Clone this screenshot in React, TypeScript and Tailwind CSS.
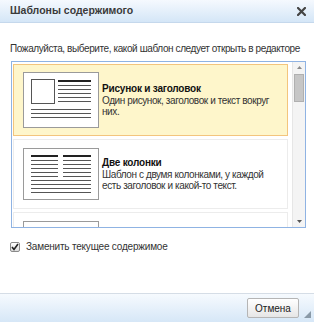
import React from "react";

const Lines = ({ count, x1, x2, startY, step }: { count: number; x1: number; x2: number; startY: number; step: number }) => (
  <>
    {Array.from({ length: count }).map((_, i) => (
      <line key={i} x1={x1} x2={x2} y1={startY + i * step} y2={startY + i * step} stroke="#555" strokeWidth="1" />
    ))}
  </>
);

// миниатюра "рисунок и заголовок"
const ThumbImage = () => (
  <svg width="76" height="56" viewBox="0 0 76 56" className="shrink-0">
    <rect x="0.5" y="0.5" width="75" height="55" fill="#fff" stroke="#9a9a9a" />
    <rect x="8.5" y="7.5" width="23" height="24" fill="#fff" stroke="#555" />
    <line x1="35" x2="68" y1="9" y2="9" stroke="#222" strokeWidth="2" />
    <Lines count={5} x1={35} x2={68} startY={13.5} step={4} />
    <Lines count={3} x1={8} x2={68} startY={37.5} step={4} />
  </svg>
);

// миниатюра "две колонки"
const ThumbColumns = () => (
  <svg width="76" height="52" viewBox="0 0 76 52" className="shrink-0">
    <rect x="0.5" y="0.5" width="75" height="51" fill="#fff" stroke="#9a9a9a" />
    <line x1="8" x2="35" y1="8" y2="8" stroke="#222" strokeWidth="2" />
    <line x1="40" x2="68" y1="8" y2="8" stroke="#222" strokeWidth="2" />
    <Lines count={5} x1={8} x2={35} startY={12.5} step={4} />
    <Lines count={5} x1={40} x2={68} startY={12.5} step={4} />
    <Lines count={4} x1={8} x2={68} startY={32.5} step={4} />
  </svg>
);

const App = () => {
  return (
    <div className="w-[314px] h-[322px] bg-white flex flex-col font-['Liberation_Sans',Arial,sans-serif] text-[#333] overflow-hidden">
      {/* заголовок окна */}
      <div className="h-[23px] shrink-0 flex items-center justify-between pl-[10px] pr-[8px] bg-gradient-to-b from-[#f5f9fe] to-[#d4e6f7] border-b border-[#c5d8ec]">
        <span className="text-[10.5px] font-bold text-[#3a3a3a]">Шаблоны содержимого</span>
        <svg width="9" height="9" viewBox="0 0 9 9">
          <path d="M1 1 L8 8 M8 1 L1 8" stroke="#444" strokeWidth="2.2" strokeLinecap="square" />
        </svg>
      </div>

      <div className="flex-1 flex flex-col pl-[11px] pt-[19px]">
        <p className="text-[10px] leading-[14px] tracking-[-0.4px] -ml-[1px] whitespace-nowrap">
          Пожалуйста, выберите, какой шаблон следует открыть в редакторе
        </p>

        {/* список шаблонов */}
        <div className="mt-[5px] w-[295px] h-[167px] border border-[#8fb3e3] flex overflow-hidden">
          <div className="flex-1 flex flex-col gap-[3px] pt-[2px] pl-[1px] overflow-hidden">
            <div className="w-[275px] h-[72px] shrink-0 flex items-center gap-[3px] pl-[9px] bg-[#fef6cb] border border-[#f3c57d]">
              <ThumbImage />
              <div className="w-[175px] text-[10px] leading-[11px] tracking-[-0.4px]">
                <div className="font-bold text-[#111] mb-[1px] tracking-[-0.2px]">Рисунок и заголовок</div>
                <div>Один рисунок, заголовок и текст вокруг них.</div>
              </div>
            </div>
            <div className="w-[275px] h-[70px] shrink-0 flex items-center gap-[3px] pl-[9px] border border-[#ececec]">
              <ThumbColumns />
              <div className="w-[175px] text-[10px] leading-[11px] tracking-[-0.4px]">
                <div className="font-bold text-[#111] mb-[1px] tracking-[-0.2px]">Две колонки</div>
                <div>Шаблон с двумя колонками, у каждой есть заголовок и какой-то текст.</div>
              </div>
            </div>
            <div className="w-[275px] h-[70px] shrink-0 pl-[9px] pt-[8px] border border-[#ececec]">
              <div className="w-[76px] h-[52px] border border-[#9a9a9a]" />
            </div>
          </div>

          {/* полоса прокрутки */}
          <div className="w-[13px] shrink-0 bg-[#f4f4f4] border-l border-[#e6e6e6] flex flex-col items-center">
            <svg width="13" height="12" viewBox="0 0 13 12">
              <path d="M4 7 L6.5 4 L9 7 Z" fill="#8a8a8a" />
            </svg>
            <div className="w-[10px] h-[28px] bg-[#c6c6c6] border border-[#b0b0b0]" />
            <div className="flex-1" />
            <svg width="13" height="12" viewBox="0 0 13 12">
              <path d="M4 5 L6.5 8 L9 5 Z" fill="#555" />
            </svg>
          </div>
        </div>

        {/* флажок */}
        <label className="mt-[11px] -ml-[1px] flex items-center gap-[6px] text-[10px] tracking-[-0.2px]">
          <span className="w-[10px] h-[10px] border border-[#8a8a8a] rounded-[2px] bg-gradient-to-b from-[#fff] to-[#dcdcdc] flex items-center justify-center">
            <svg width="8" height="8" viewBox="0 0 8 8">
              <path d="M1 4 L3 6.5 L7 1" stroke="#222" strokeWidth="1.6" fill="none" />
            </svg>
          </span>
          Заменить текущее содержимое
        </label>
      </div>

      {/* нижняя панель */}
      <div className="h-[29px] shrink-0 border-t border-[#d5dde6] bg-gradient-to-b from-[#f6fafe] to-[#d6e7f7] flex items-center justify-end pr-[15px] relative">
        <button className="w-[52px] h-[20px] text-[10px] text-[#222] border border-[#b5b5b5] rounded-[2px] bg-gradient-to-b from-[#ffffff] to-[#e6e6e6]">
          Отмена
        </button>
        <svg width="7" height="7" viewBox="0 0 7 7" className="absolute right-[3px] bottom-[4px]">
          <path d="M7 0 L7 7 L0 7 Z" fill="#8a9aa8" />
        </svg>
      </div>
    </div>
  );
};

export default App;
